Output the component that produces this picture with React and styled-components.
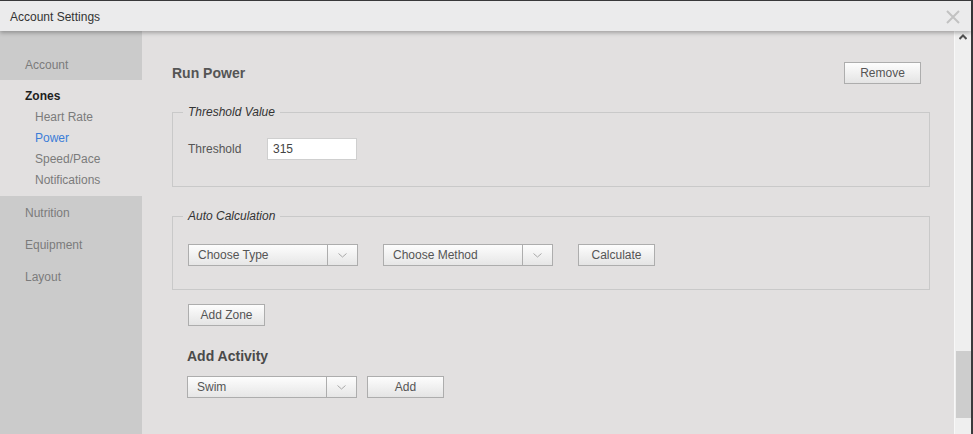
import React from "react";
import styled, { createGlobalStyle } from "styled-components";

const Global = createGlobalStyle`
  html, body { margin: 0; padding: 0; background: #3a3a3c; }
  body { font-family: "Liberation Sans", Arial, sans-serif; font-size: 12px; }
  * { box-sizing: border-box; }
`;

const Page = styled.div`
  width: 973px;
  height: 434px;
  padding: 1px 2px 0 0;
  background: #3a3a3c;
  overflow: hidden;
`;

const Dialog = styled.div`
  width: 971px;
  height: 433px;
  display: flex;
  flex-direction: column;
  background: #e2e0e0;
`;

const Header = styled.div`
  position: relative;
  z-index: 2;
  height: 30px;
  flex: none;
  display: flex;
  align-items: center;
  justify-content: space-between;
  padding: 0 10px 0 10px;
  background: #ebebec;
  box-shadow: 0 2px 4px rgba(0, 0, 0, 0.28);
`;

const Title = styled.div`
  font-size: 12px;
  color: #333;
  padding-top: 1px;
`;

const Close = styled.svg`
  width: 14px;
  height: 14px;
  margin-right: 1px;
  margin-top: 2px;
`;

const Body = styled.div`
  flex: 1;
  display: flex;
  min-height: 0;
`;

const Sidebar = styled.nav`
  width: 142px;
  flex: none;
  background: #cbcbcb;
  padding-top: 17px;
`;

const NavItem = styled.div`
  height: 32px;
  padding: 2px 0 0 25px;
  line-height: 30px;
  color: #7b7b7b;
  font-size: 12px;
`;

const ActiveGroup = styled.div`
  background: #e2e0e0;
  padding: 4px 0 6px;
`;

const GroupTitle = styled.div`
  height: 22px;
  padding: 2px 0 0 25px;
  line-height: 20px;
  font-weight: bold;
  color: #1e1e1e;
`;

const SubItem = styled.div`
  height: 21px;
  padding: 2px 0 0 35px;
  line-height: 19px;
  color: ${(p) => (p.$active ? "#3b7dd8" : "#7b7b7b")};
`;

const Content = styled.main`
  flex: 1;
  padding: 31px 24px 0 30px;
  background: #e2e0e0;
  overflow: hidden;
`;

const TopRow = styled.div`
  display: flex;
  align-items: center;
  justify-content: space-between;
  height: 22px;
  padding-right: 9px;
`;

const Heading = styled.h2`
  margin: 0;
  font-size: 14px;
  font-weight: bold;
  color: #555;
  line-height: 18px;
`;

const Button = styled.button`
  width: 77px;
  height: 22px;
  padding: 0;
  border: 1px solid #adadad;
  background: linear-gradient(#fdfdfd, #e4e4e4);
  font-family: "Liberation Sans", Arial, sans-serif;
  font-size: 12px;
  color: #555;
  flex: none;
`;

const Fieldset = styled.fieldset`
  margin: ${(p) => p.$mt}px 0 0;
  padding: ${(p) => p.$pt}px 15px ${(p) => p.$pb}px;
  border: 1px solid #c9c9c9;
  min-width: 0;
`;

const Legend = styled.legend`
  padding: 0 5px;
  margin-left: -5px;
  font-style: italic;
  font-size: 12px;
  line-height: 14px;
  color: #333;
`;

const Row = styled.div`
  display: flex;
  align-items: center;
  gap: ${(p) => p.$gap || 0}px;
`;

const Label = styled.label`
  width: 79px;
  color: #555;
`;

const Input = styled.input`
  width: 90px;
  height: 22px;
  border: 1px solid #cfcfcf;
  background: #fff;
  padding: 0 5px;
  font-family: "Liberation Sans", Arial, sans-serif;
  font-size: 12px;
  color: #444;
  outline: none;
`;

const SelectBox = styled.div`
  width: 170px;
  height: 22px;
  display: flex;
  border: 1px solid #adadad;
  background: linear-gradient(#fdfdfd, #e6e6e6);
  flex: none;
`;

const SelectText = styled.div`
  flex: 1;
  padding-left: 9px;
  line-height: 20px;
  color: #555;
`;

const SelectArrow = styled.div`
  width: 30px;
  border-left: 1px solid #adadad;
  display: flex;
  align-items: center;
  justify-content: center;
`;

const Section = styled.div`
  margin-top: ${(p) => p.$mt}px;
  padding-left: ${(p) => p.$pl}px;
`;

const SubHeading = styled.h3`
  margin: 0;
  font-size: 14px;
  font-weight: bold;
  color: #4a4a4a;
  line-height: 18px;
`;

const Scrollbar = styled.div`
  width: 17px;
  flex: none;
  background: #efefef;
  border-left: 1px solid #f8f8f8;
  display: flex;
  flex-direction: column;
  align-items: center;
`;

const ScrollArrow = styled.svg`
  width: 8px;
  height: 6px;
  margin-top: 3px;
`;

const Thumb = styled.div`
  width: 15px;
  height: 67px;
  margin-top: 311px;
  background: #cdcdcd;
`;

const Chevron = () => (
  <svg width="9" height="5" viewBox="0 0 9 5">
    <path d="M0.5 0.5 L4.5 4 L8.5 0.5" fill="none" stroke="#a8a8a8" strokeWidth="1" />
  </svg>
);

const Select = ({ children }) => (
  <SelectBox>
    <SelectText>{children}</SelectText>
    <SelectArrow>
      <Chevron />
    </SelectArrow>
  </SelectBox>
);

export default function App() {
  return (
    <Page>
      <Global />
      <Dialog>
        <Header>
          <Title>Account Settings</Title>
          <Close viewBox="0 0 14 14">
            <path d="M1 1 L13 13 M13 1 L1 13" stroke="#c2c2c2" strokeWidth="2" />
          </Close>
        </Header>
        <Body>
          <Sidebar>
            <NavItem>Account</NavItem>
            <ActiveGroup>
              <GroupTitle>Zones</GroupTitle>
              <SubItem>Heart Rate</SubItem>
              <SubItem $active>Power</SubItem>
              <SubItem>Speed/Pace</SubItem>
              <SubItem>Notifications</SubItem>
            </ActiveGroup>
            <NavItem>Nutrition</NavItem>
            <NavItem>Equipment</NavItem>
            <NavItem>Layout</NavItem>
          </Sidebar>
          <Content>
            <TopRow>
              <Heading>Run Power</Heading>
              <Button>Remove</Button>
            </TopRow>
            <Fieldset $mt={21} $pt={19} $pb={26}>
              <Legend>Threshold Value</Legend>
              <Row>
                <Label>Threshold</Label>
                <Input defaultValue="315" />
              </Row>
            </Fieldset>
            <Fieldset $mt={22} $pt={21} $pb={23}>
              <Legend>Auto Calculation</Legend>
              <Row $gap={25}>
                <Select>Choose Type</Select>
                <Select>Choose Method</Select>
                <Button>Calculate</Button>
              </Row>
            </Fieldset>
            <Section $mt={14} $pl={16}>
              <Button>Add Zone</Button>
            </Section>
            <Section $mt={21} $pl={15}>
              <SubHeading>Add Activity</SubHeading>
            </Section>
            <Section $mt={11} $pl={15}>
              <Row $gap={10}>
                <Select>Swim</Select>
                <Button>Add</Button>
              </Row>
            </Section>
          </Content>
          <Scrollbar>
            <ScrollArrow viewBox="0 0 8 6">
              <path d="M0.5 5 L4 1.5 L7.5 5" fill="none" stroke="#505050" strokeWidth="2" />
            </ScrollArrow>
            <Thumb />
          </Scrollbar>
        </Body>
      </Dialog>
    </Page>
  );
}
